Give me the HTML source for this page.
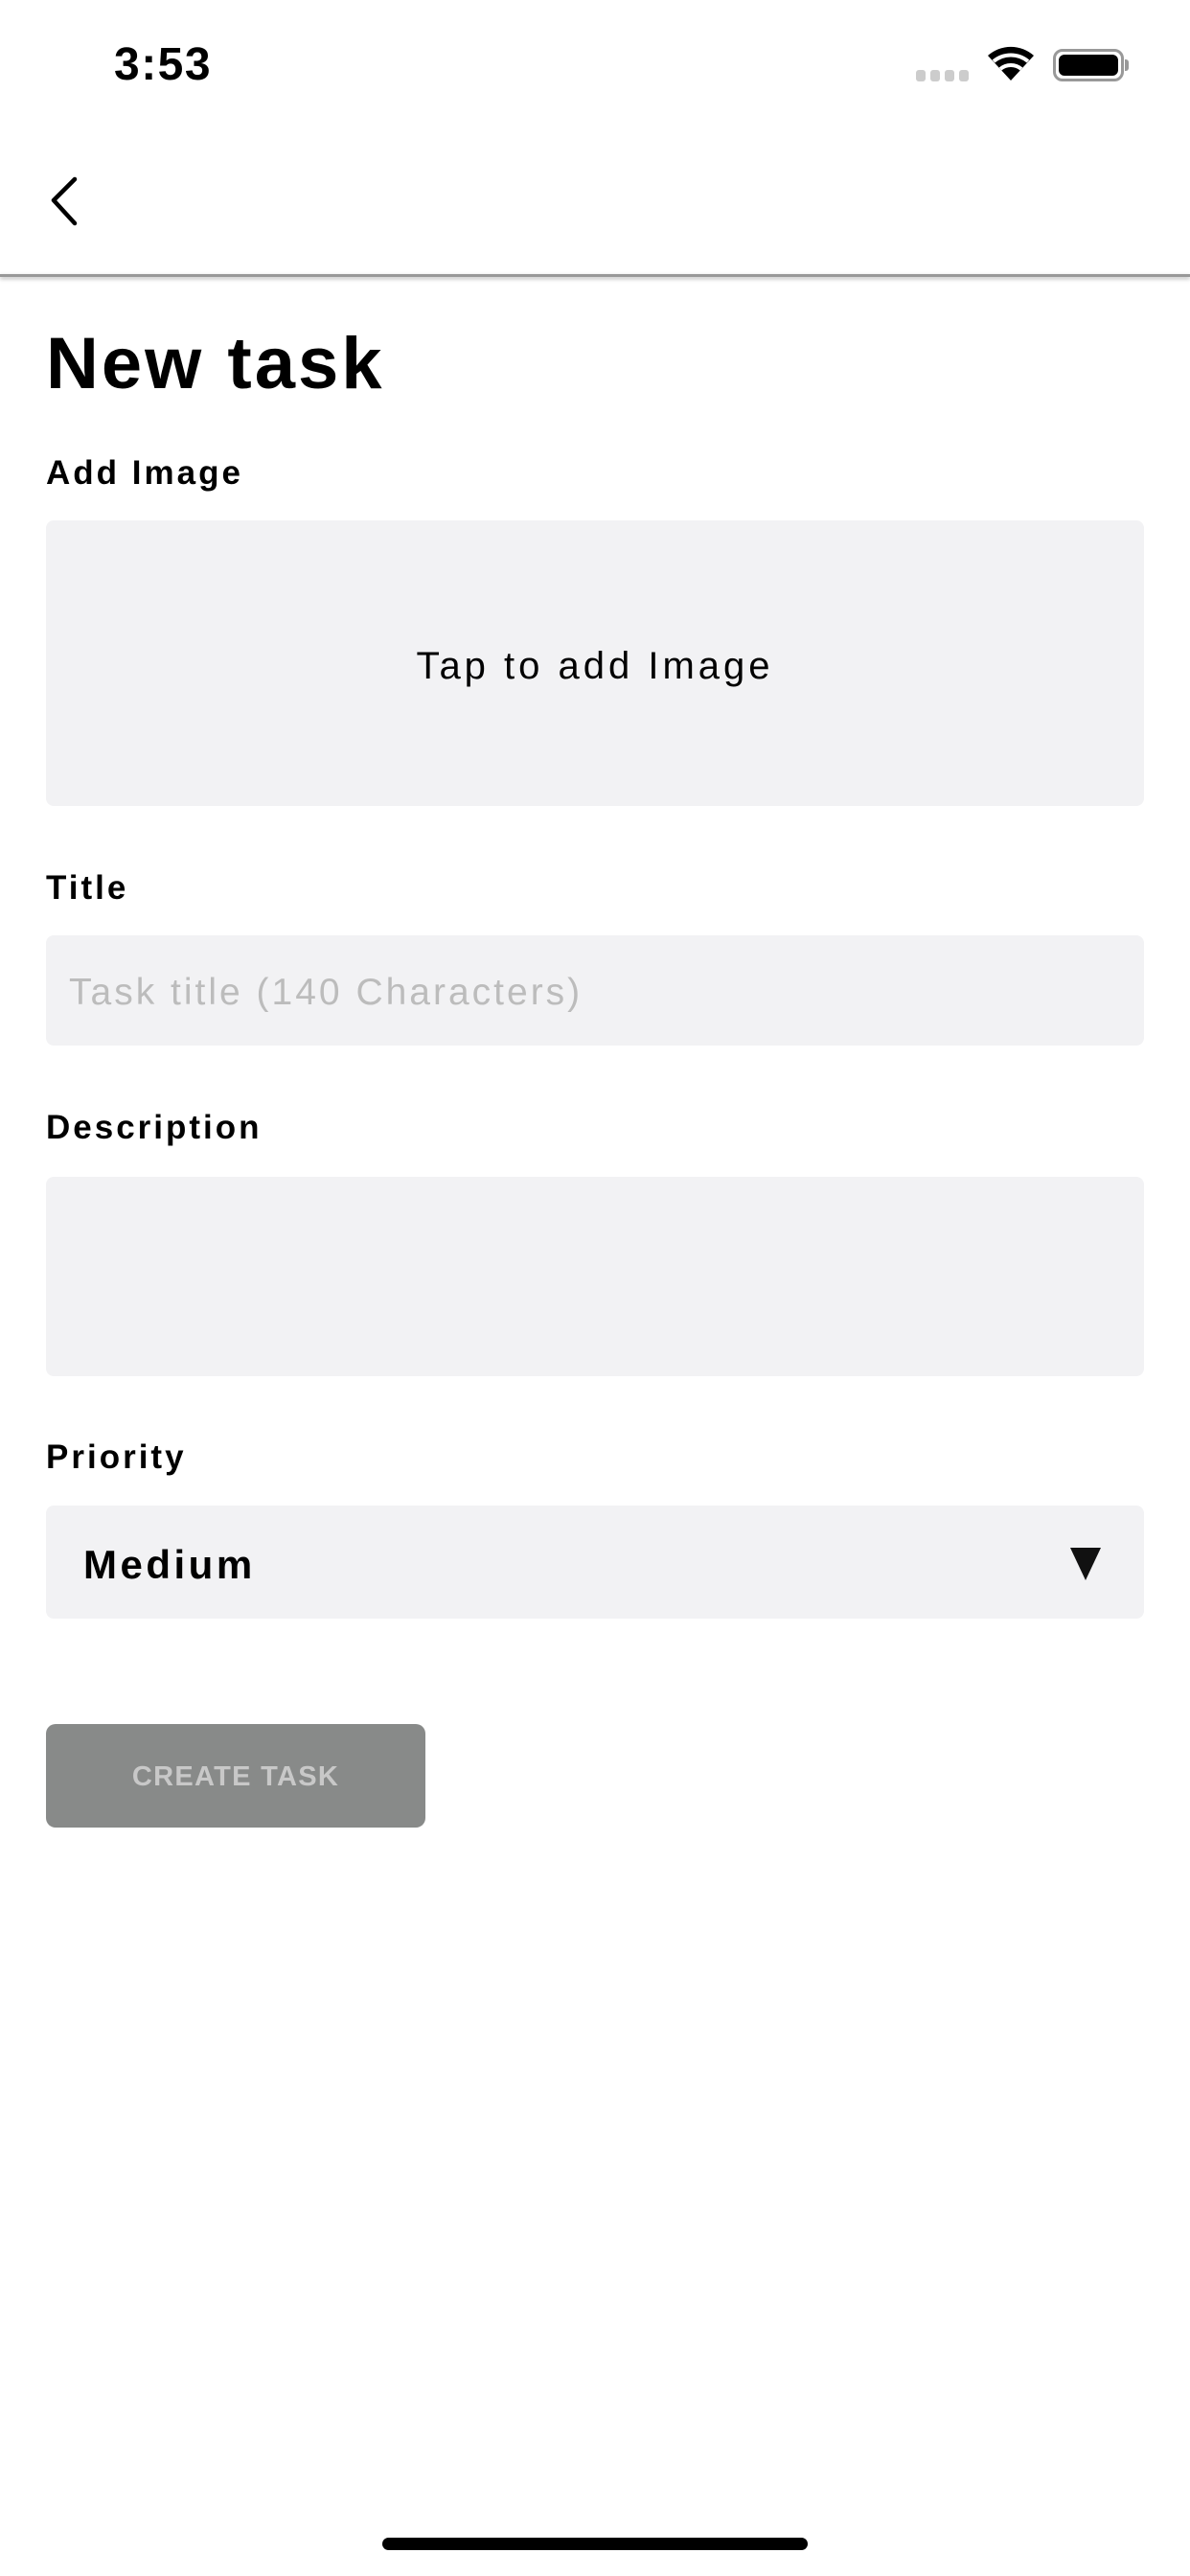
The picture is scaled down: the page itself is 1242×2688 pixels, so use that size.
<!DOCTYPE html>
<html><head><meta charset="utf-8"><style>
*{margin:0;padding:0;box-sizing:border-box}
body{width:1242px;height:2688px;background:#fff;font-family:"Liberation Sans",sans-serif;position:relative;overflow:hidden;color:#000}
.a{position:absolute}
.lbl{position:absolute;left:48px;font-size:35px;font-weight:bold;line-height:40px;letter-spacing:3px}
.box{position:absolute;left:48px;width:1146px;background:#f2f2f4;border-radius:8px}
</style></head><body>
<div class="a" style="left:119px;top:40px;font-size:48px;font-weight:bold;letter-spacing:1.5px">3:53</div>
<div class="a" style="left:956px;top:73px">
 <span class="a" style="left:0;top:0;width:10px;height:12px;background:#ccc;border-radius:3px"></span>
 <span class="a" style="left:15px;top:0;width:10px;height:12px;background:#ccc;border-radius:3px"></span>
 <span class="a" style="left:30px;top:0;width:10px;height:12px;background:#ccc;border-radius:3px"></span>
 <span class="a" style="left:45px;top:0;width:10px;height:12px;background:#ccc;border-radius:3px"></span>
</div>
<svg class="a" style="left:1029px;top:46px" width="52" height="40" viewBox="0 0 52 40">
<path d="M26 38 L2 12 A36 36 0 0 1 50 12 Z" fill="#000"/>
<path d="M8 18 A28 28 0 0 1 44 18" stroke="#fff" stroke-width="4" fill="none"/>
<path d="M15 26 A17 17 0 0 1 37 26" stroke="#fff" stroke-width="4" fill="none"/>
</svg>
<div class="a" style="left:1099px;top:51px;width:74px;height:34px;border:3px solid #999;border-radius:10px;padding:3px"><div style="width:100%;height:100%;background:#000;border-radius:6px"></div></div>
<div class="a" style="left:1174px;top:62px;width:4px;height:12px;background:#999;border-radius:0 3px 3px 0"></div>
<svg class="a" style="left:48px;top:183px" width="40" height="56" viewBox="0 0 40 56"><path d="M30 4 L8 26 L30 50" stroke="#000" stroke-width="4.5" fill="none" stroke-linecap="round" stroke-linejoin="round"/></svg>
<div class="a" style="left:0;top:286px;width:1242px;height:3px;background:#999;box-shadow:0 2px 4px rgba(0,0,0,.3)"></div>
<div class="a" style="left:48px;top:335px;font-size:76px;font-weight:bold;line-height:90px;letter-spacing:3px">New task</div>
<div class="lbl" style="top:474px">Add Image</div>
<div class="box" style="top:543px;height:298px"><div style="text-align:center;line-height:298px;font-size:40px;letter-spacing:4px;padding-top:3px">Tap to add Image</div></div>
<div class="lbl" style="top:907px">Title</div>
<div class="box" style="top:976px;height:115px"><div style="position:absolute;left:24px;top:38px;font-size:39px;color:#bcbcbc;letter-spacing:3px">Task title (140 Characters)</div></div>
<div class="lbl" style="top:1157px">Description</div>
<div class="box" style="top:1228px;height:208px"></div>
<div class="lbl" style="top:1501px">Priority</div>
<div class="box" style="top:1571px;height:118px"><div style="position:absolute;left:39px;top:38px;font-size:42px;font-weight:bold;letter-spacing:3.5px">Medium</div>
<svg style="position:absolute;left:1069px;top:44px" width="32" height="34"><path d="M0 0 H32 L16 34 Z" fill="#111"/></svg></div>
<div class="a" style="left:48px;top:1799px;width:396px;height:108px;background:#888a89;border-radius:10px;color:#c8c8c8;font-size:29px;font-weight:bold;text-align:center;line-height:110px;letter-spacing:1.3px">CREATE TASK</div>
<div class="a" style="left:399px;top:2648px;width:444px;height:13px;background:#000;border-radius:7px"></div>
</body></html>
